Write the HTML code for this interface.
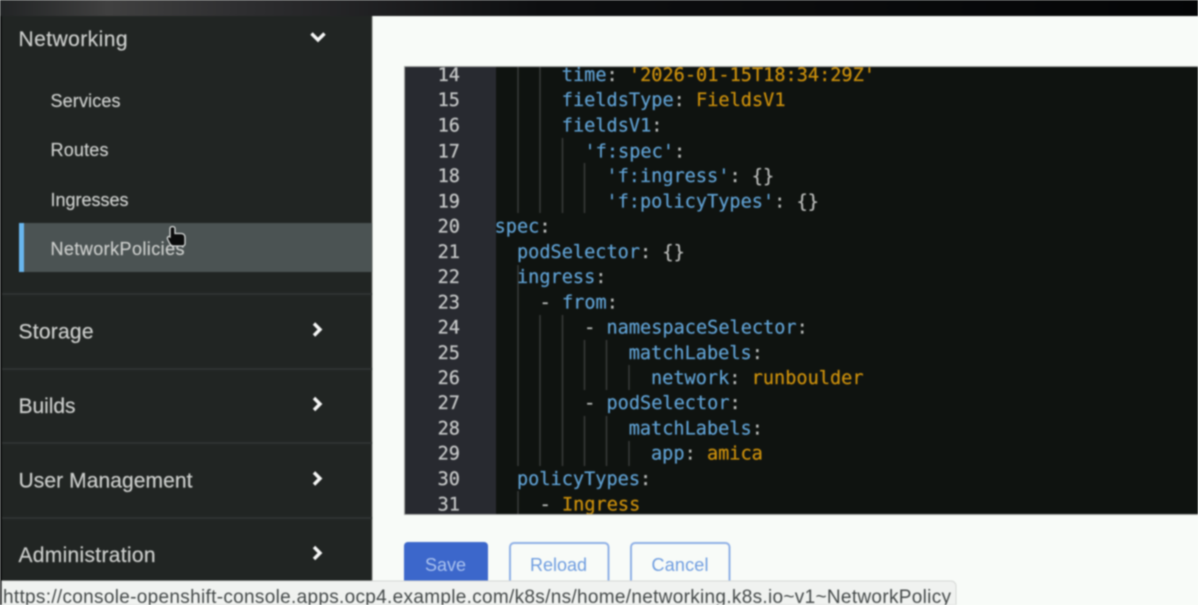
<!DOCTYPE html>
<html lang="en">
<head>
<meta charset="utf-8">
<title>NetworkPolicy</title>
<style>
html,body{margin:0;padding:0;width:1198px;height:605px;overflow:hidden;background:#f8fbf8}
svg{display:block;position:absolute;left:0;top:0;filter:blur(.75px)}
.nav{font-family:"Liberation Sans",sans-serif;fill:#cbcdcb;stroke:#cbcdcb;stroke-width:.2px}
.code{font-family:"DejaVu Sans Mono",monospace;font-size:18.58px;white-space:pre}
.k{fill:#5f9fd0;stroke:#5f9fd0;stroke-width:.25px}.v{fill:#c98e0c;stroke:#c98e0c;stroke-width:.25px}.p{fill:#b8bab8;stroke:#b8bab8;stroke-width:.25px}
.n{fill:#c4c6c6;stroke:#c4c6c6;stroke-width:.25px;text-anchor:end}
.g{stroke:#3c3e3c;stroke-width:1.4}
.chev{fill:none;stroke:#f4f5f4;stroke-width:3.4}
</style>
</head>
<body>
<svg width="1198" height="605" viewBox="0 0 1198 605" xmlns="http://www.w3.org/2000/svg">
<defs>
<linearGradient id="top" x1="0" x2="1" y1="0" y2="0">
<stop offset="0" stop-color="#222425"/><stop offset=".09" stop-color="#404040"/><stop offset=".2" stop-color="#2e2e30"/><stop offset=".45" stop-color="#0d0e10"/><stop offset="1" stop-color="#040506"/>
</linearGradient>
<clipPath id="ed"><rect x="405" y="67" width="793" height="447"/></clipPath>
</defs>
<rect width="1198" height="605" fill="#f8fbf8"/>
<rect width="1198" height="16" fill="url(#top)"/>
<rect x="0" y="16" width="2" height="565" fill="#0d0e0e"/>
<!-- Sidebar -->
<rect x="2" y="16" width="370" height="565" fill="#212523"/>
<rect x="371.500" y="16" width="1" height="565" fill="#70736f"/>
<rect x="19" y="223" width="353" height="49" fill="#4b5353"/>
<rect x="19" y="223" width="5" height="49" fill="#69b6ee"/>
<rect x="2" y="293" width="370" height="2" fill="#2f3332"/>
<rect x="2" y="368" width="370" height="2" fill="#2f3332"/>
<rect x="2" y="442" width="370" height="2" fill="#2f3332"/>
<rect x="2" y="517" width="370" height="2" fill="#2f3332"/>
<text class="nav" x="18.500" y="46" font-size="21" textLength="109">Networking</text>
<text class="nav" x="50.500" y="107" font-size="18" textLength="70">Services</text>
<text class="nav" x="50.500" y="156" font-size="18" textLength="58">Routes</text>
<text class="nav" x="50.500" y="206" font-size="18" textLength="78">Ingresses</text>
<text class="nav" x="50.500" y="255" font-size="18" textLength="134">NetworkPolicies</text>
<text class="nav" x="18.500" y="338.500" font-size="21" textLength="75">Storage</text>
<text class="nav" x="18.500" y="413" font-size="21" textLength="57">Builds</text>
<text class="nav" x="18.500" y="487.500" font-size="21" textLength="174">User Management</text>
<text class="nav" x="18.500" y="562" font-size="21" textLength="137">Administration</text>
<path class="chev" d="M311.500 33.500l6.500 6.500 6.500-6.500"/>
<path class="chev" d="M314 323.500l6 6-6 6"/>
<path class="chev" d="M314 398l6 6-6 6"/>
<path class="chev" d="M314 472.500l6 6-6 6"/>
<path class="chev" d="M314 547l6 6-6 6"/>
<!-- cursor -->
<path d="M170 228.500c0-2.500 5-2.500 5 0v5h6c3 0 4 2 4 4v6c0 1.500-1 2.500-2.500 2.500h-9c-2 0-3-1-4-3l-2-4c-.5-2 1-3 2.500-2z" fill="#0b0c0c" stroke="#d8dbda" stroke-width="1.300"/>
<!-- Editor -->
<rect x="404" y="66" width="794" height="449" fill="#a9aba9"/>
<rect x="405" y="67" width="793" height="447" fill="#0f1310"/>
<rect x="405" y="67" width="91" height="447" fill="#282a30"/>
<g clip-path="url(#ed)">
<path class="g" d="M518 67V213M540 67V213M562.500 138V213M584.500 163V213M518 265V466M540 315V466M562.500 315V466M584.500 340V390M606.500 340V390M629 365V390M584.500 416V466M606.500 416V466M629 441V466M518 491V514"/>
<g class="code">
<text class="n" x="460" y="81">14</text><text class="n" x="460" y="106">15</text><text class="n" x="460" y="131.500">16</text><text class="n" x="460" y="157.300">17</text><text class="n" x="460" y="182">18</text><text class="n" x="460" y="207.300">19</text><text class="n" x="460" y="232.600">20</text><text class="n" x="460" y="257.900">21</text><text class="n" x="460" y="283">22</text><text class="n" x="460" y="308.300">23</text><text class="n" x="460" y="333.400">24</text><text class="n" x="460" y="358.800">25</text><text class="n" x="460" y="384">26</text><text class="n" x="460" y="409.200">27</text><text class="n" x="460" y="434.400">28</text><text class="n" x="460" y="459.600">29</text><text class="n" x="460" y="485">30</text><text class="n" x="460" y="510.300">31</text>
<text x="561.800" y="81" xml:space="preserve"><tspan class="k">time</tspan><tspan class="p">: </tspan><tspan class="v">'2026-01-15T18:34:29Z'</tspan></text>
<text x="561.800" y="106" xml:space="preserve"><tspan class="k">fieldsType</tspan><tspan class="p">: </tspan><tspan class="v">FieldsV1</tspan></text>
<text x="561.800" y="131.500"><tspan class="k">fieldsV1</tspan><tspan class="p">:</tspan></text>
<text x="584.500" y="157.300"><tspan class="k">'f:spec'</tspan><tspan class="p">:</tspan></text>
<text x="606.400" y="182" xml:space="preserve"><tspan class="k">'f:ingress'</tspan><tspan class="p">: {}</tspan></text>
<text x="606.400" y="207.300" xml:space="preserve"><tspan class="k">'f:policyTypes'</tspan><tspan class="p">: {}</tspan></text>
<text x="494.600" y="232.600"><tspan class="k">spec</tspan><tspan class="p">:</tspan></text>
<text x="517" y="257.900" xml:space="preserve"><tspan class="k">podSelector</tspan><tspan class="p">: {}</tspan></text>
<text x="517" y="283"><tspan class="k">ingress</tspan><tspan class="p">:</tspan></text>
<text x="539.600" y="308.300" xml:space="preserve"><tspan class="p">- </tspan><tspan class="k">from</tspan><tspan class="p">:</tspan></text>
<text x="584.100" y="333.400" xml:space="preserve"><tspan class="p">- </tspan><tspan class="k">namespaceSelector</tspan><tspan class="p">:</tspan></text>
<text x="628.700" y="358.800"><tspan class="k">matchLabels</tspan><tspan class="p">:</tspan></text>
<text x="651" y="384" xml:space="preserve"><tspan class="k">network</tspan><tspan class="p">: </tspan><tspan class="v">runboulder</tspan></text>
<text x="584.100" y="409.200" xml:space="preserve"><tspan class="p">- </tspan><tspan class="k">podSelector</tspan><tspan class="p">:</tspan></text>
<text x="628.700" y="434.400"><tspan class="k">matchLabels</tspan><tspan class="p">:</tspan></text>
<text x="651" y="459.600" xml:space="preserve"><tspan class="k">app</tspan><tspan class="p">: </tspan><tspan class="v">amica</tspan></text>
<text x="517" y="485"><tspan class="k">policyTypes</tspan><tspan class="p">:</tspan></text>
<text x="539.600" y="510.300" xml:space="preserve"><tspan class="p">- </tspan><tspan class="v">Ingress</tspan></text>
</g>
</g>
<!-- Buttons -->
<rect x="404" y="542" width="84" height="60" rx="4" fill="#3c67cb"/>
<text x="445.500" y="571" font-family="Liberation Sans,sans-serif" font-size="18" fill="#a9c1ee" text-anchor="middle" textLength="41">Save</text>
<rect x="510" y="543" width="98.500" height="60" rx="4" fill="#f8fbf8" stroke="#8fb0e6" stroke-width="2"/>
<text x="558.500" y="571" font-family="Liberation Sans,sans-serif" font-size="18" fill="#6f9de0" text-anchor="middle" textLength="57">Reload</text>
<rect x="631" y="543" width="98.500" height="60" rx="4" fill="#f8fbf8" stroke="#8fb0e6" stroke-width="2"/>
<text x="680" y="571" font-family="Liberation Sans,sans-serif" font-size="18" fill="#6f9de0" text-anchor="middle" textLength="57">Cancel</text>
<!-- Status tooltip -->
<rect x="0" y="581" width="2" height="24" fill="#0d0e0e"/>
<path d="M2 581H951a5 5 0 0 1 5 5V605H2z" fill="#f0f2f0" stroke="#d6d8d6" stroke-width="1"/>
<text x="3" y="603" font-family="Liberation Sans,sans-serif" font-size="19" fill="#454a4a" textLength="948">https://console-openshift-console.apps.ocp4.example.com/k8s/ns/home/networking.k8s.io~v1~NetworkPolicy</text>
</svg>
</body>
</html>
